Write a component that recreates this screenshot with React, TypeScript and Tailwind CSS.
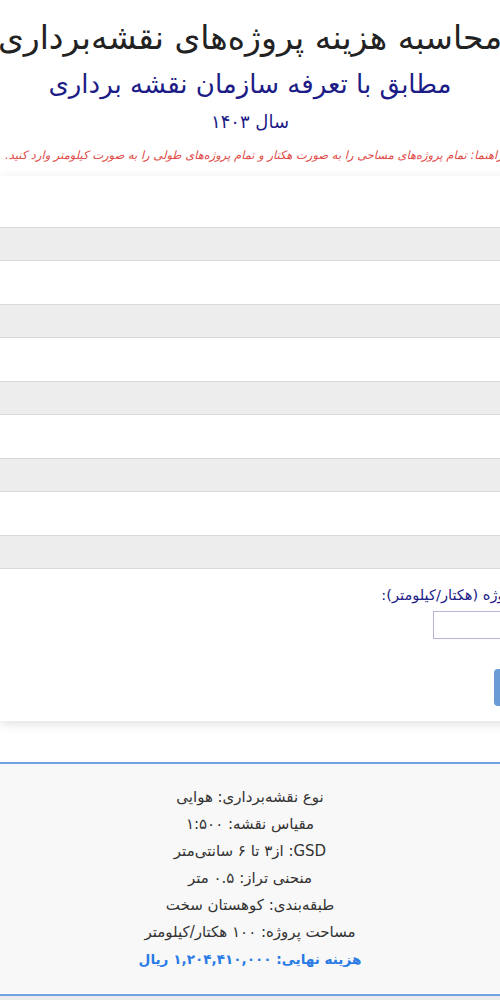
import React from 'react';

const rows = [0, 1, 2, 3, 4];

const results = [
  'نوع نقشه‌برداری: هوایی',
  'مقیاس نقشه: ۱:۵۰۰',
  'GSD: از۳ تا ۶ سانتی‌متر',
  'منحنی تراز: ۰.۵ متر',
  'طبقه‌بندی: کوهستان سخت',
  'مساحت پروژه: ۱۰۰ هکتار/کیلومتر',
];

const App: React.FC = () => {
  return (
    <div className="min-h-[1000px] w-[500px] overflow-hidden bg-white font-['DejaVu_Sans',sans-serif]">
      <header dir="rtl" className="pt-[13px] text-center">
        <div className="flex justify-center">
          <h1 className="whitespace-nowrap text-[33px] leading-[50px] text-[#222]">
            محاسبه هزینه پروژه‌های نقشه‌برداری
          </h1>
        </div>
        <h2 className="mt-[1px] text-[26px] leading-[40px] text-[#1c1c86]">
          مطابق با تعرفه سازمان نقشه برداری
        </h2>
        <p className="mt-[2px] text-[18px] leading-[32px] text-[#1c1c86]">سال ۱۴۰۳</p>
      </header>

      <p
        dir="rtl"
        className="ml-[5px] mt-[8px] w-max whitespace-nowrap text-[11.5px] italic leading-[18px] text-[#e04a45]"
      >
        راهنما: تمام پروژه‌های مساحی را به صورت هکتار و تمام پروژه‌های طولی را به صورت کیلومتر وارد کنید.
      </p>

      <div dir="rtl" className="mt-[12px] w-[640px] bg-white shadow-[0_3px_10px_rgba(0,0,0,0.12)]">
        {rows.map((r) => (
          <div key={r}>
            <div className={r === 0 ? 'h-[51px]' : 'h-[43px]'} />
            <div className="h-[34px] border-y border-[#d8d8d8] bg-[#ededed]" />
          </div>
        ))}
        <div className="flex h-[152px] flex-col items-start pr-[70px] pt-[15px]">
          <label className="text-[14.6px] leading-[22px] text-[#1c1c86]">مساحت پروژه (هکتار/کیلومتر):</label>
          <input className="mt-[5px] h-[28px] w-[137px] border border-[#b8b4d8] bg-white" />
          <button className="mt-[30px] h-[37px] w-[76px] rounded-[4px] bg-[#6a9bd6] text-[14px] text-white">
            محاسبه
          </button>
        </div>
      </div>

      <section
        dir="rtl"
        className="mt-[41px] border-t-2 border-[#6ea2e2] bg-[#f8f8f8] pb-[20px] pt-[20px] text-center text-[15px] leading-[27px] text-[#333]"
      >
        {results.map((t) => (
          <p key={t}>{t}</p>
        ))}
        <p className="text-[13.6px] font-bold text-[#2a7be4]">هزینه نهایی: ۱,۲۰۴,۴۱۰,۰۰۰ ریال</p>
      </section>
      <div className="mt-px h-[20px] border-t-2 border-[#6ea2e2] bg-[#ececec]" />
    </div>
  );
};

export default App;
